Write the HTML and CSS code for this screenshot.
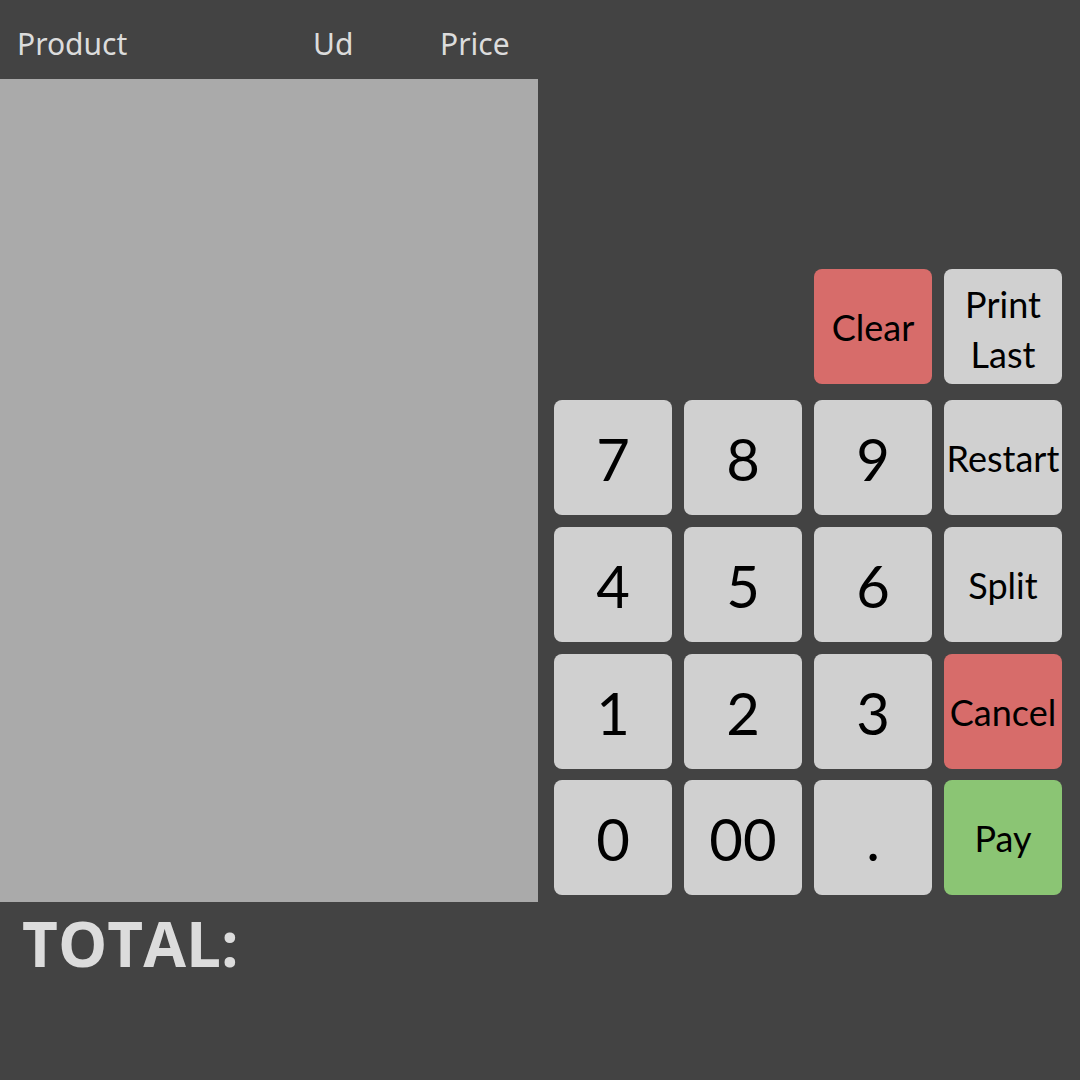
FILE: index.html
```html
<!DOCTYPE html>
<html>
<head>
<meta charset="utf-8">
<link rel="stylesheet" href="styles.css">
</head>
<body>
<div class="app">
  <div class="left">
    <div class="header">
      <span class="col-product">Product</span>
      <span class="col-ud">Ud</span>
      <span class="col-price">Price</span>
    </div>
    <div class="list"></div>
    <div class="total">TOTAL:</div>
  </div>
  <div class="right">
    <div class="pad">
      <div class="key empty"></div>
      <div class="key empty"></div>
      <button class="key red label">Clear</button>
      <button class="key label two">Print<br>Last</button>
      <button class="key num">7</button>
      <button class="key num">8</button>
      <button class="key num">9</button>
      <button class="key label">Restart</button>
      <button class="key num">4</button>
      <button class="key num">5</button>
      <button class="key num">6</button>
      <button class="key label">Split</button>
      <button class="key num">1</button>
      <button class="key num">2</button>
      <button class="key num">3</button>
      <button class="key red label">Cancel</button>
      <button class="key num">0</button>
      <button class="key num">00</button>
      <button class="key num">.</button>
      <button class="key green label">Pay</button>
    </div>
  </div>
</div>
</body>
</html>
```
FILE: styles.css
```css
html, body {
  margin: 0;
  padding: 0;
  background: #434343;
  width: 1080px;
  height: 1080px;
  overflow: hidden;
}
.app {
  display: flex;
  height: 1080px;
}
.left {
  width: 538px;
  display: flex;
  flex-direction: column;
}
.header {
  height: 79px;
  display: flex;
  align-items: center;
  font-family: "Noto Sans", sans-serif;
  font-size: 30px;
  color: #dcdcdc;
  padding-top: 8px;
  box-sizing: border-box;
}
.col-product { margin-left: 17px; width: 296px; }
.col-ud { width: 127px; }
.list {
  height: 823px;
  background: #aaaaaa;
}
.total {
  font-family: "Open Sans", sans-serif;
  font-weight: 700;
  font-size: 62px;
  color: #dcdcdc;
  padding-left: 22px;
  line-height: 1;
  margin-top: 10px;
}
.right {
  padding-left: 16px;
  padding-top: 269px;
}
.pad {
  display: grid;
  grid-template-columns: repeat(4, 118px);
  grid-template-rows: 131px 127px 127px 126px 115px;
  column-gap: 12px;
}
.key {
  height: 115px;
  border: none;
  border-radius: 8px;
  background: #d0d0d0;
  color: #000;
  font-family: "Lato", sans-serif;
  padding: 0;
  display: flex;
  align-items: center;
  justify-content: center;
  text-align: center;
}
.key.empty { background: transparent; }
.key.num {
  font-size: 58px;
  padding-top: 2px;
}
.key.label {
  font-size: 36px;
  line-height: 50px;
}
.key.red { background: #d76c6a; }
.key.green { background: #8bc574; }
.key.two { padding-top: 4px; }
```
